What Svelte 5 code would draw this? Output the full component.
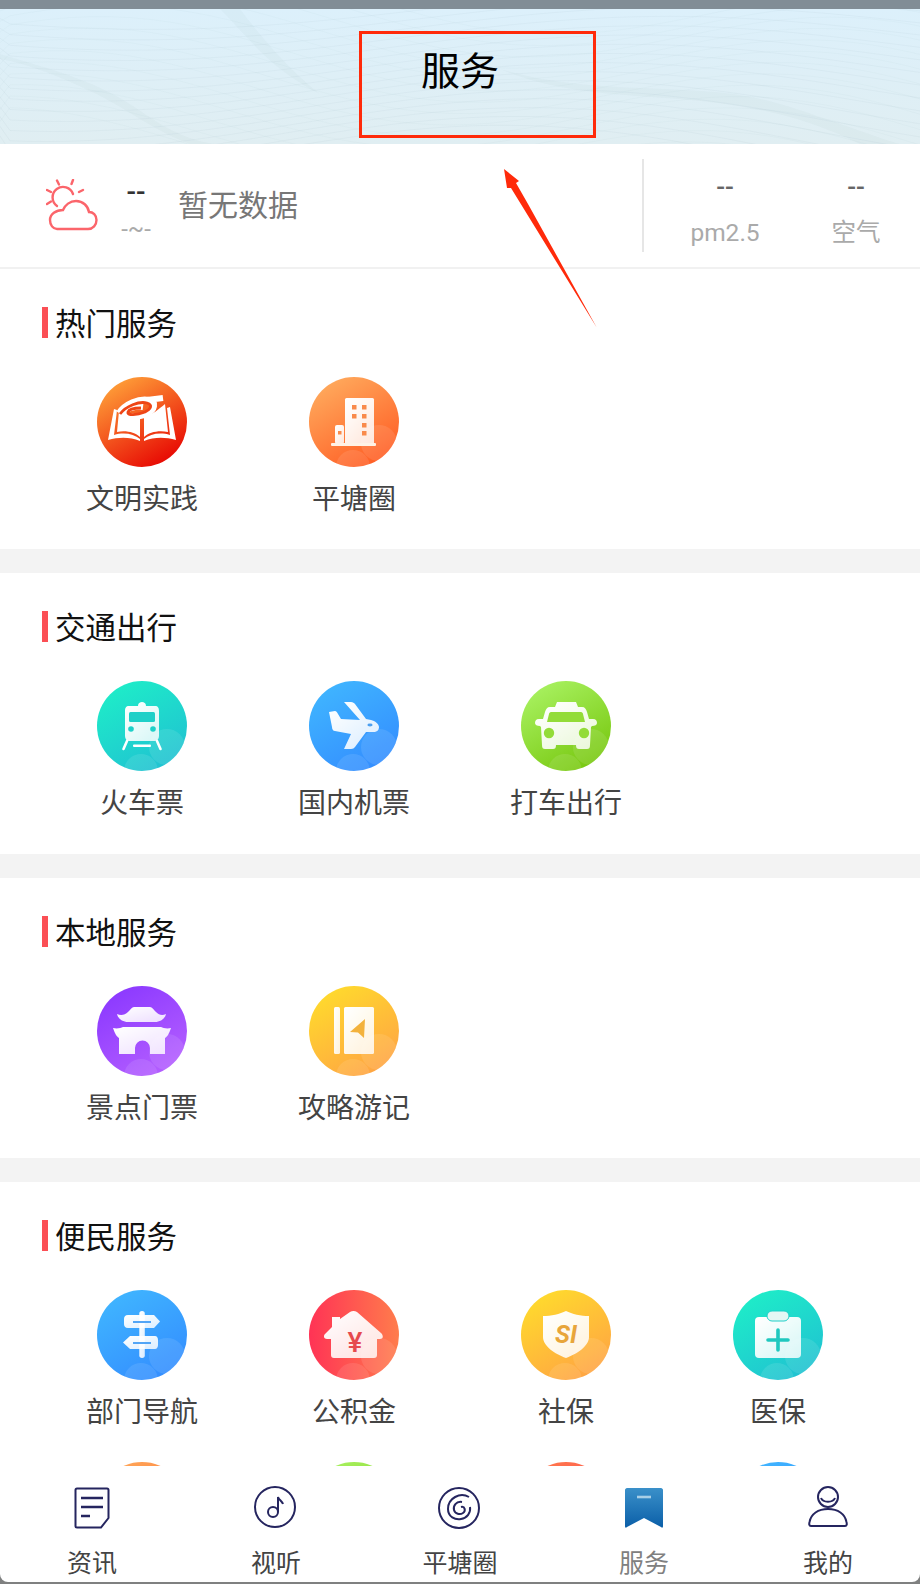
<script>
	const sections = [
		{
			title: '热门服务',
			items: [
				{ id: 'book', label: '文明实践', from: '#ffa43a', to: '#e60000' },
				{ id: 'building', label: '平塘圈', from: '#ffac5e', to: '#ff5a22' }
			]
		},
		{
			title: '交通出行',
			items: [
				{ id: 'train', label: '火车票', from: '#1eeec8', to: '#20c0d2' },
				{ id: 'plane', label: '国内机票', from: '#40b6ff', to: '#338cff' },
				{ id: 'taxi', label: '打车出行', from: '#a9f262', to: '#76c60c' }
			]
		},
		{
			title: '本地服务',
			items: [
				{ id: 'gate', label: '景点门票', from: '#8a38ff', to: '#b660ff' },
				{ id: 'guide', label: '攻略游记', from: '#ffdc2c', to: '#ffa244' }
			]
		},
		{
			title: '便民服务',
			items: [
				{ id: 'sign', label: '部门导航', from: '#40b6ff', to: '#338cff' },
				{ id: 'house', label: '公积金', from: '#ff3355', to: '#ff7c4c', flat: true },
				{ id: 'shield', label: '社保', from: '#ffdc2c', to: '#ffa244' },
				{ id: 'clip', label: '医保', from: '#1eeec8', to: '#20c0d2' },
				{ id: 'more1', label: '', from: '#ffa95b', to: '#ff5d22' },
				{ id: 'more2', label: '', from: '#a9f262', to: '#76c60c' },
				{ id: 'more3', label: '', from: '#ff7a4c', to: '#ff3355' },
				{ id: 'more4', label: '', from: '#40b6ff', to: '#338cff' }
			]
		}
	];

	const tabs = [
		{ id: 'news', label: '资讯' },
		{ id: 'media', label: '视听' },
		{ id: 'circle', label: '平塘圈' },
		{ id: 'service', label: '服务', active: true },
		{ id: 'me', label: '我的' }
	];

	// fine mesh lines of the banner background
	const wave = (y, amp, len, phase, drift) => {
		let d = `M-10 ${y}`;
		for (let x = 10; x <= 940; x += 20) {
			const py = y + Math.sin(x / len + phase) * amp + (x * drift) / 100;
			d += ` L${x} ${py.toFixed(1)}`;
		}
		return d;
	};
	const meshA = Array.from({ length: 16 }, (_, i) => wave(4 + i * 9, 18 + i, 170, 0.6 + i * 0.07, -1 + i * 0.2));
	const meshB = Array.from({ length: 14 }, (_, i) => wave(-30 + i * 12, 28, 110, 3 + i * 0.12, 5));
</script>

<div class="page">
	<div class="statusBar"></div>

	<header class="banner">
		<svg class="bannerLines" viewBox="0 0 920 135" preserveAspectRatio="none">
			{#each meshA as d}
				<path {d} />
			{/each}
			{#each meshB as d}
				<path {d} class="steep" />
			{/each}
			<path class="band" d="M0 45 C50 60 90 70 130 95 C160 115 180 130 215 135 L190 135 C150 120 120 95 90 82 C60 68 30 55 0 50Z" />
			<path class="band" d="M220 0 C250 30 270 60 320 85 C300 70 270 40 240 0Z" />
			<path class="band" d="M500 60 C600 90 700 70 780 95 C830 110 880 130 900 135 L860 135 C800 105 740 95 680 90 C620 85 560 85 500 60Z" />
		</svg>
		<h1 class="bannerTitle">服务</h1>
	</header>

	<main class="content">
		<section class="weather">
			<svg class="weatherIcon" viewBox="0 0 52 52" fill="none" stroke="#fb656b" stroke-width="2.400" stroke-linecap="round">
				<path d="M11 27 A10.500 10.500 0 1 1 27 15" />
				<path d="M11 1.500 L13 5.500 M27 1 L25.500 5 M1 11 L5 13 M37 11 L33 13 M1 25 L5 22.500" />
				<path d="M11 50 H42 C47 50 50.500 46 50.500 41 C50.500 36 47 33 43 33 C42 27 37 22 30 22 C24 22 19 26 17 31 C10 31 4 35 4 41 C4 46 7 50 11 50Z" fill="#fff" />
			</svg>
			<div class="temp">
				<span class="tempValue">--</span>
				<span class="tempRange">-~-</span>
			</div>
			<p class="weatherText">暂无数据</p>
			<div class="air">
				<div class="airItem">
					<span class="airValue">--</span>
					<span class="airLabel">pm2.5</span>
				</div>
				<div class="airItem">
					<span class="airValue">--</span>
					<span class="airLabel">空气</span>
				</div>
			</div>
		</section>

		{#each sections as section}
			<section class="group">
				<h2 class="groupTitle">{section.title}</h2>
				<ul class="grid">
					{#each section.items as item}
						<li class="cell">
							<svg class="serviceIcon" viewBox="0 0 90 90">
								<defs>
									<linearGradient id="bg-{item.id}" x1={item.flat ? '0' : '0.2'} y1={item.flat ? '0.5' : '0'} x2={item.flat ? '1' : '0.8'} y2={item.flat ? '0.5' : '1'}>
										<stop offset="0" stop-color={item.from} />
										<stop offset="1" stop-color={item.to} />
									</linearGradient>
									<linearGradient id="gl-{item.id}" x1="0.1" y1="0" x2="0.9" y2="1">
										<stop offset="0" stop-color="#fff" />
										<stop offset="1" stop-color="#fff" stop-opacity="0.82" />
									</linearGradient>
									<clipPath id="cp-{item.id}"><circle cx="45" cy="45" r="45" /></clipPath>
								</defs>
								<circle cx="45" cy="45" r="45" fill="url(#bg-{item.id})" />
								{#if item.id !== 'book'}
									<g clip-path="url(#cp-{item.id})" fill="#fff" fill-opacity="0.1">
										<circle cx="44" cy="90" r="17" />
										<circle cx="70" cy="66" r="18" />
									</g>
								{/if}
								<g fill="url(#gl-{item.id})">
									{#if item.id === 'book'}
										<path d="M11 63 L17 32 L20 33 L17 58 C27 55 37 57 43 62 L43 64 C33 60 22 60 11 63Z" fill="#fff" />
										<path d="M79 63 L73 30 L70 31 L73 58 C63 55 53 57 47 62 L47 64 C57 60 68 60 79 63Z" fill="#fff" />
										<path d="M22 34 L20 55 C28 53 38 55 43 60 L43 38 C36 36 28 36 22 34Z" fill="#fff" />
										<path d="M68 27 L71 55 C62 53 52 55 47 60 L47 40 C55 38 62 32 68 27Z" fill="#fff" />
										<path d="M22 36 C28 27 42 21 52 23 C60 25 58 33 50 37 C40 41 27 42 27 36 C27 32 38 29 46 30 M50 23 L66 21" fill="none" stroke="#fff" stroke-width="6" />
										<path d="M23 37 C29 29 42 24 50 26 C56 28 54 32 48 35 C40 38 30 39 31 35 C32 32 38 31 44 31" fill="none" stroke="#ee4516" stroke-width="2.800" />
									{:else if item.id === 'building'}
										<rect x="36" y="21" width="29" height="46" rx="1.5" />
										<rect x="26" y="48" width="9" height="19" rx="2" />
										<rect x="22" y="66" width="45" height="3" rx="1" fill="#fff2e6" />
										<g fill="#f98a4b">
											<rect x="43" y="28" width="4.5" height="4.5" /><rect x="53" y="28" width="4.5" height="4.5" />
											<rect x="43" y="37" width="4.5" height="4.5" /><rect x="53" y="37" width="4.5" height="4.5" />
											<rect x="53" y="46" width="4.5" height="4.5" /><rect x="53" y="54" width="4.5" height="4.5" />
											<rect x="29" y="54" width="3.5" height="3.5" />
										</g>
									{:else if item.id === 'train'}
										<path d="M41 25 C41 22 43 21 45 21 C47 21 49 22 49 25 L58 25 C61 25 62 27 62 30 L62 55 C62 58 60 60 58 60 L32 60 C30 60 28 58 28 55 L28 30 C28 27 29 25 32 25Z" />
										<rect x="32" y="31" width="26" height="10" rx="1.5" fill="#1fd0c8" />
										<circle cx="34" cy="48" r="2.8" fill="#1fd0c8" />
										<circle cx="56" cy="48" r="2.8" fill="#1fd0c8" />
										<path d="M30 60 L26.5 68 M60 60 L63.5 68" stroke="#fff" stroke-width="2.6" stroke-linecap="round" />
										<rect x="36" y="63.5" width="18" height="2.6" rx="1" fill="#fff" />
									{:else if item.id === 'plane'}
										<path d="M20 31 L26 30 C27 30 28 31 29 33 L32 38 L51 39 L35 21 L42 21 C44 21 45 22 46 23 L57 38 L62 39 C66 40 70 43 70 46 C70 49 68 51 64 51 L57 51 L46 66 C45 67 44 68 42 68 L35 68 L42 53 L26 50 C24 50 23 48 23 46Z" />
										<ellipse cx="61" cy="44" rx="2.6" ry="1.4" fill="#4c9ff0" />
									{:else if item.id === 'taxi'}
										<path d="M36 21 L55 21 L57 26 L61 26 C64 26 65 28 66 31 L68 38 L72 38 C75 38 76 40 76 42 C76 44 74 45 71 45 L70 46 L69 64 C69 67 68 68 66 68 L58 68 C56 68 55 67 55 64 L35 64 C35 67 34 68 32 68 L24 68 C22 68 21 67 21 64 L20 46 L19 45 C16 45 14 44 14 42 C14 40 15 38 18 38 L22 38 L24 31 C25 28 26 26 29 26 L34 26Z" />
										<path d="M30 31 L60 31 C61 31 62 32 62 33 L64 41 L26 41 L28 33 C28 32 29 31 30 31Z" fill="#93dc38" />
										<circle cx="28" cy="52" r="5.2" fill="#93dc38" />
										<circle cx="63" cy="52" r="5.2" fill="#93dc38" />
									{:else if item.id === 'gate'}
										<path d="M20 28 C24 30 28 29 31 26 C33 24 35 21 37 21 L53 21 C55 21 57 24 59 26 C62 29 65 30 69 28 C68 33 63 36 58 36 L31 36 C26 36 21 33 20 28Z" />
										<path d="M16 42 C20 43 24 42 26 41 L64 41 C66 42 70 43 74 42 C72 48 70 51 68 52 L68 68 L53 68 L53 62 A7.5 7.5 0 0 0 38 62 L38 68 L22 68 L22 52 C20 51 18 48 16 42Z" />
									{:else if item.id === 'guide'}
										<rect x="25" y="21" width="6" height="47" rx="1.5" />
										<rect x="35" y="21" width="30" height="47" rx="1.5" />
										<path d="M56 33 L41 46 L49 46.5 L55 52Z" fill="#f3b23d" />
									{:else if item.id === 'sign'}
										<rect x="42.300" y="21" width="5.500" height="47" rx="2.700" />
										<path d="M31 25 L57 25 L63 31.5 L57 38 L31 38 C28 38 27 36 27 34 L27 29 C27 27 28 25 31 25Z" />
										<path d="M33 46 L58 46 C60 46 61 48 61 50 L61 55 C61 57 60 59 58 59 L33 59 L26 52.5Z" />
										<path d="M36 32 H54 M36 53 H54" stroke="#52a5f6" stroke-width="2.2" />
									{:else if item.id === 'house'}
										<path d="M23 27 L31 27 L31 29 L41 22 C43 20.500 46 20.500 48 22 L72 43 C75 46 74 49 71 49 L68 49 L68 65 C68 67 67 68 65 68 L25 68 C23 68 22 67 22 65 L22 49 L18 49 C15 49 14 46 16 44 L23 37Z" />
										<text class="glyphYen" x="46" y="62">¥</text>
									{:else if item.id === 'shield'}
										<path d="M45 21 C51 24 60 26 68 26 L68 47 C68 56 56 64 45 68 C34 64 22 56 22 47 L22 26 C30 26 39 24 45 21Z" />
										<text class="glyphSi" x="45" y="53">SI</text>
									{:else if item.id === 'clip'}
										<rect x="22" y="27" width="46" height="41" rx="4" />
										<rect x="34" y="21" width="22" height="10" rx="5" fill="#e4f7f4" stroke="#20cfc8" stroke-width="1" />
										<path d="M45 40 V60 M35 50 H55" stroke="#1fc8bf" stroke-width="3.6" stroke-linecap="round" />
									{/if}
								</g>
							</svg>
							<span class="cellLabel">{item.label}</span>
						</li>
					{/each}
				</ul>
			</section>
		{/each}
	</main>

	<nav class="tabBar">
		{#each tabs as tab}
			<div class="tab" class:active={tab.active}>
				<svg class="tabIcon" viewBox="0 0 44 44" fill="none" stroke="#25255f" stroke-width="2">
					{#if tab.id === 'news'}
						<path d="M7 2.500 H37 C38 2.500 38.500 3 38.500 4 V32 L31 41.500 H7 C6 41.500 5.500 41 5.500 40 V4 C5.500 3 6 2.500 7 2.500Z" />
						<path d="M11 12 H33 M11 21 H33 M11 30 H20" stroke-width="2.400" />
					{:else if tab.id === 'media'}
						<circle cx="21" cy="21" r="20" />
						<circle cx="19" cy="26" r="5" />
						<path d="M24 26 V11 C25 14 28 15 29 18" />
					{:else if tab.id === 'circle'}
						<circle cx="21" cy="22" r="20" />
						<path d="M31 11 C22 6 10 12 10 23 C10 31 17 34 23 33 C29 32 33 27 32 21" />
						<path d="M24 16 C18 15 15 20 16 24 C17 28 22 29 25 27 C28 25 27 20 23 21" />
					{:else if tab.id === 'service'}
						<defs>
							<linearGradient id="tabMark" x1="0" y1="0" x2="0" y2="1">
								<stop offset="0" stop-color="#3a90c9" />
								<stop offset="1" stop-color="#0b5fa8" />
							</linearGradient>
						</defs>
						<path d="M5 2 H39 C40 2 41 3 41 4 V40 C41 42 40 42 39 41 L22 32 L5 41 C4 42 3 42 3 40 V4 C3 3 4 2 5 2Z" fill="url(#tabMark)" stroke="none" />
						<path d="M15 11 H29" stroke="#a8cfe6" stroke-width="2.600" />
					{:else}
						<circle cx="22" cy="11" r="10" />
						<path d="M15 12 C17 17 27 17 29 12" />
						<path d="M5 40 C3 40 3 38 3.500 36 C5 28 12 23 22 23 C32 23 39 28 40.500 36 C41 38 41 40 39 40Z" />
					{/if}
				</svg>
				<span class="tabLabel">{tab.label}</span>
			</div>
		{/each}
	</nav>

	<!-- red markup drawn over the screenshot -->
	<div class="markBox"></div>
	<svg class="markArrow" viewBox="0 0 120 180">
		<path d="M14 9 L29 21 L26 23 L38 44 L107 168 L21 28 L17 28Z" fill="#ff2a0a" />
	</svg>
</div>

<style>
	:global(body) {
		margin: 0;
	}

	.page {
		position: relative;
		display: flex;
		flex-direction: column;
		width: 920px;
		height: 1584px;
		overflow: hidden;
		background-color: #7f8080;
		font-family: 'Noto Sans CJK SC', 'Noto Sans', sans-serif;
	}

	.statusBar {
		flex: none;
		height: 9px;
		background-color: #818d96;
	}

	.banner {
		flex: none;
		position: relative;
		box-sizing: border-box;
		height: 135px;
		padding-top: 37px;
		overflow: hidden;
		background: linear-gradient(180deg, #dcf0fb, #e0eef2);
	}

	.bannerLines {
		position: absolute;
		top: 0;
		left: 0;
		width: 100%;
		height: 100%;
	}

	.bannerLines path {
		fill: none;
		stroke: #8fa9b6;
		stroke-width: 0.5;
		stroke-opacity: 0.16;
	}

	.bannerLines path.steep {
		stroke-opacity: 0.1;
	}

	.bannerLines path.band {
		fill: #9db2bd;
		fill-opacity: 0.07;
		stroke: none;
	}

	.bannerTitle {
		position: relative;
		margin: 0;
		font-size: 39px;
		font-weight: 400;
		line-height: 44px;
		text-align: center;
		color: #000;
	}

	.content {
		flex: 1;
		min-height: 0;
		overflow: hidden;
		background-color: #f3f3f3;
	}

	.weather {
		display: flex;
		align-items: center;
		box-sizing: border-box;
		height: 125px;
		padding-left: 46px;
		border-bottom: 2px solid #f1f1f1;
		background-color: #fff;
	}

	.weatherIcon {
		flex: none;
		width: 52px;
		height: 52px;
		margin-top: -1px;
	}

	.temp {
		display: flex;
		flex-direction: column;
		align-items: center;
		gap: 7px;
		width: 40px;
		margin-left: 18px;
		padding-top: 9px;
	}

	.tempValue {
		font: 500 28px/30px Roboto, sans-serif;
		color: #333;
	}

	.tempRange {
		font: 24px/30px Roboto, sans-serif;
		color: #aaa;
	}

	.weatherText {
		margin: -5px 0 0 22px;
		font-size: 30px;
		color: #777;
	}

	.air {
		display: flex;
		gap: 11px;
		box-sizing: border-box;
		width: 278px;
		height: 93px;
		margin-left: auto;
		padding: 13px 0 0 21px;
		border-left: 2px solid #e6e6e6;
	}

	.airItem {
		display: flex;
		flex-direction: column;
		align-items: center;
		gap: 13px;
		width: 120px;
	}

	.airValue {
		font: 500 26px/30px Roboto, sans-serif;
		color: #666;
	}

	.airLabel {
		font-size: 24.5px;
		line-height: 36px;
		color: #aaa;
		font-family: Roboto, 'Noto Sans CJK SC', sans-serif;
	}

	.group {
		box-sizing: border-box;
		padding: 38px 0 34.33px;
		margin-bottom: 24px;
		background-color: #fff;
	}

	.groupTitle {
		display: flex;
		align-items: flex-start;
		gap: 7px;
		height: 31px;
		margin: 0 0 39px 42px;
		font-size: 30.5px;
		font-weight: 400;
		line-height: 30px;
		color: #111;
	}

	.groupTitle::before {
		content: '';
		width: 6px;
		height: 31px;
		background-color: #fb4f55;
	}

	.grid {
		display: grid;
		grid-template-columns: repeat(4, 212px);
		row-gap: 34px;
		margin: 0;
		padding: 0 36px;
		list-style: none;
	}

	.cell {
		display: flex;
		flex-direction: column;
		align-items: center;
		gap: 12px;
	}

	.serviceIcon {
		display: block;
		width: 90px;
		height: 90px;
	}

	.glyphYen {
		font: 500 28px Roboto, sans-serif;
		fill: #e64a4e;
		text-anchor: middle;
	}

	.glyphSi {
		font: italic 700 25px Roboto, sans-serif;
		fill: #e8a53a;
		text-anchor: middle;
	}

	.cellLabel {
		min-height: 36px;
		font-size: 28px;
		line-height: 36px;
		color: #444;
	}

	.tabBar {
		flex: none;
		display: grid;
		grid-template-columns: repeat(5, 1fr);
		height: 116px;
		margin-bottom: 2px;
		border-radius: 0 0 8px 8px;
		background-color: #fff;
	}

	.tab {
		display: flex;
		flex-direction: column;
		align-items: center;
		gap: 16px;
		padding-top: 20px;
	}

	.tabIcon {
		display: block;
		width: 44px;
		height: 44px;
	}

	.tabLabel {
		font-size: 25px;
		line-height: 30px;
		color: #444;
	}

	.tab.active .tabLabel {
		color: #808080;
	}

	.markBox {
		position: absolute;
		top: 31px;
		left: 359px;
		box-sizing: border-box;
		width: 237px;
		height: 107px;
		border: 3px solid #ff2a0a;
	}

	.markArrow {
		position: absolute;
		top: 160px;
		left: 490px;
		width: 120px;
		height: 180px;
	}
</style>
